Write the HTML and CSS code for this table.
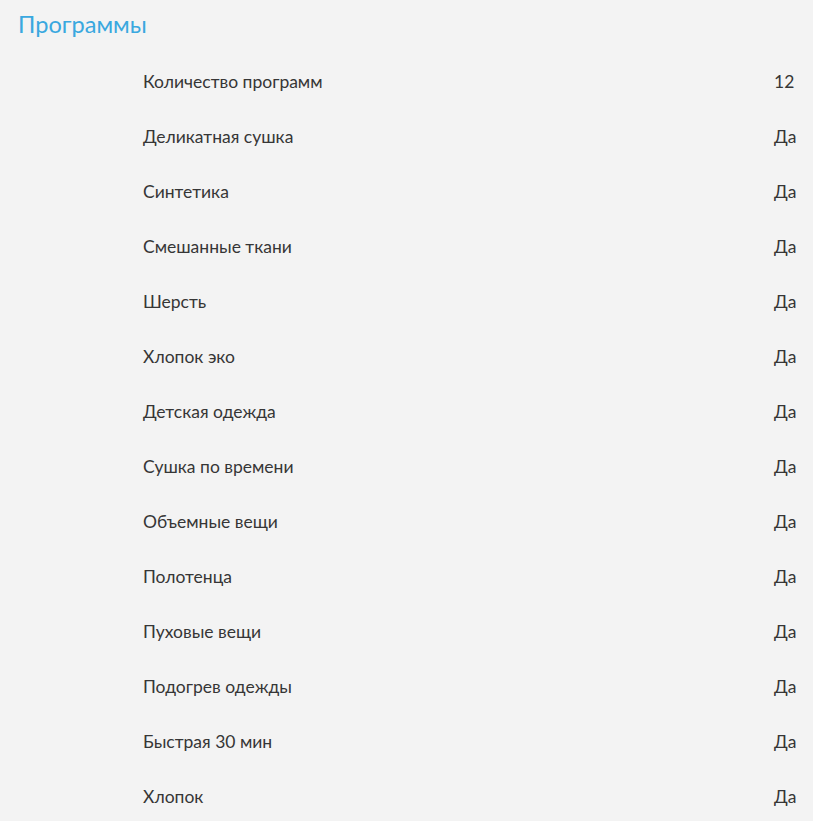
FILE: index.html
```html
<!DOCTYPE html>
<html lang="ru">
<head>
<meta charset="utf-8">
<title>Программы</title>
<link rel="stylesheet" href="styles.css">
</head>
<body>
<section class="specs">
  <h2 class="specs__title">Программы</h2>
  <div class="specs__list">
    <div class="row"><span class="row__name">Количество программ</span><span class="row__value">12</span></div>
    <div class="row"><span class="row__name">Деликатная сушка</span><span class="row__value">Да</span></div>
    <div class="row"><span class="row__name">Синтетика</span><span class="row__value">Да</span></div>
    <div class="row"><span class="row__name">Смешанные ткани</span><span class="row__value">Да</span></div>
    <div class="row"><span class="row__name">Шерсть</span><span class="row__value">Да</span></div>
    <div class="row"><span class="row__name">Хлопок эко</span><span class="row__value">Да</span></div>
    <div class="row"><span class="row__name">Детская одежда</span><span class="row__value">Да</span></div>
    <div class="row"><span class="row__name">Сушка по времени</span><span class="row__value">Да</span></div>
    <div class="row"><span class="row__name">Объемные вещи</span><span class="row__value">Да</span></div>
    <div class="row"><span class="row__name">Полотенца</span><span class="row__value">Да</span></div>
    <div class="row"><span class="row__name">Пуховые вещи</span><span class="row__value">Да</span></div>
    <div class="row"><span class="row__name">Подогрев одежды</span><span class="row__value">Да</span></div>
    <div class="row"><span class="row__name">Быстрая 30 мин</span><span class="row__value">Да</span></div>
    <div class="row"><span class="row__name">Хлопок</span><span class="row__value">Да</span></div>
  </div>
</section>
</body>
</html>
```
FILE: styles.css
```css
html, body {
  margin: 0;
  padding: 0;
  background: #f3f3f3;
}
body {
  font-family: Lato, "Noto Sans", sans-serif;
  color: #363636;
}
.specs__title {
  margin: 0;
  padding: 9px 0 0 18px;
  height: 54px;
  box-sizing: border-box;
  font-size: 23.6px;
  font-weight: 400;
  line-height: 30px;
  color: #3aa8df;
}
.specs__list {
  display: flex;
  flex-direction: column;
}
.row {
  display: grid;
  grid-template-columns: 143px 1fr 39px;
  height: 55px;
  align-items: center;
  font-size: 17.5px;
  line-height: 20px;
}
.row__name {
  grid-column: 2;
}
.row__value {
  grid-column: 3;
}
```
